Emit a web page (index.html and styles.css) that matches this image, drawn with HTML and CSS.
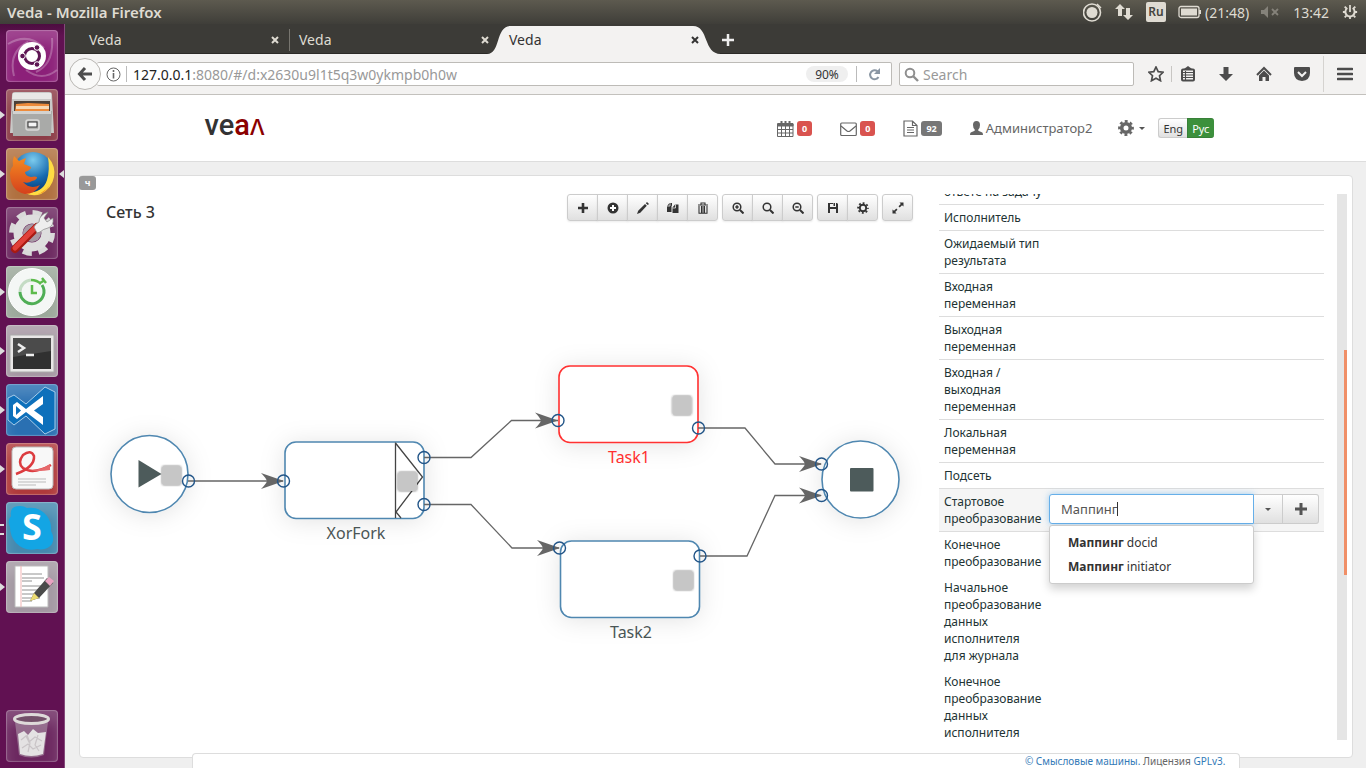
FILE: index.html
```html
<!DOCTYPE html>
<html lang="ru">
<head>
<meta charset="utf-8">
<title>Veda</title>
<link rel="stylesheet" href="styles.css">
</head>
<body>
<header class="topbar">
  <span class="topbar-title">Veda - Mozilla Firefox</span>
  <div class="tray">
    <svg width="20" height="20" viewBox="0 0 20 20"><circle cx="9" cy="10.500" r="8.500" fill="none" stroke="#dfdbd2" stroke-width="1.600"/><circle cx="9" cy="10.500" r="5.500" fill="#dfdbd2"/><path d="M14 2l4 4" stroke="#dfdbd2" stroke-width="1.500"/></svg>
    <svg class="tray-net" width="18" height="18" viewBox="0 0 18 18" fill="#dfdbd2"><path d="M5 1l5 5H7v7H3V6H0zM13 17l5-5h-3V5h-4v7H8z"/></svg>
    <span class="tray-lang">Ru</span>
    <svg class="tray-battery" width="24" height="14" viewBox="0 0 24 14"><rect x="1" y="1.500" width="20" height="11" rx="2" fill="none" stroke="#dfdbd2" stroke-width="1.300"/><rect x="3" y="3.500" width="16" height="7" fill="#dfdbd2"/><path d="M22 5v4" stroke="#dfdbd2" stroke-width="2"/></svg>
    <span>(21:48)</span>
    <svg class="tray-sound" width="18" height="12" viewBox="0 0 18 12"><path d="M0 4h3l4-4v12L3 8H0z" fill="#85827a"/><path d="M11 3l6 6m0-6l-6 6" stroke="#85827a" stroke-width="1.800"/></svg>
    <span class="tray-clock">13:42</span>
    <svg class="tray-power" width="16" height="16" viewBox="0 0 18 18" fill="none" stroke="#dfdbd2"><path d="M6 4.500a5.200 5.200 0 1 0 6 0" stroke-width="2.200"/><path d="M9 1v8" stroke-width="2"/><path d="M1 9h3M14 9h3M3 15l2-2M15 15l-2-2M9 17v-3M3 3l2 2M15 3l-2 2" stroke-width="2"/></svg>
  </div>
</header>
<div class="desktop">
  <nav class="launcher" aria-label="Launcher">
    <button class="app app-dash" aria-label="Ubuntu"><svg viewBox="0 0 52 52"><g fill="none" stroke="#ffffff" stroke-opacity=".25" stroke-width="2"><path d="M2 14Q22 2 38 18M46 8Q48 34 30 42M8 46Q2 22 22 12M20 40Q36 52 51 40"/></g><circle cx="26" cy="26" r="14" fill="#fff"/><circle cx="26" cy="26" r="7.500" fill="none" stroke="#5e1654" stroke-width="3"/><g fill="#5e1654" stroke="#fff"><circle cx="16.500" cy="26" r="2.800"/><circle cx="31" cy="17.500" r="2.800"/><circle cx="31" cy="34.500" r="2.800"/></g></svg></button>
    <button class="app app-files running" aria-label="Files"><svg viewBox="0 0 52 52"><path d="M6 6q0-3 3-3h34q3 0 3 3l2 38H4z" fill="#c9c9c7"/><path d="M7 4h38v6H6z" fill="#e8e8e6"/><path d="M8 12h36v12H8z" fill="#4b4038"/><path d="M10 15l12-1 21 1v7H9z" fill="#ee8c3c"/><path d="M10 17h33v3H10z" fill="#f8d9b4"/><path d="M6 22h40l-1 25H7z" fill="#a9aaa8"/><path d="M7 22h38v3H7z" fill="#d2d2d0"/><rect x="20" y="31" width="13" height="10" rx="2" fill="#b0b0ae" stroke="#d9d9d7" stroke-width="1.500"/><rect x="22" y="33" width="9" height="5" fill="#f4f4f4" stroke="#333"/></svg></button>
    <button class="app app-firefox running focused" aria-label="Firefox"><svg viewBox="0 0 52 52"><defs><radialGradient id="globe" cx=".5" cy=".2" r=".8"><stop offset="0" stop-color="#7ccbed"/><stop offset=".6" stop-color="#176ab0"/><stop offset="1" stop-color="#0b3a76"/></radialGradient><linearGradient id="fox" x2="0" y2="1"><stop offset="0" stop-color="#f58c22"/><stop offset="1" stop-color="#d5401c"/></linearGradient></defs><circle cx="27" cy="24" r="20" fill="url(#globe)"/><path d="M42 9q8 9 6 20T35 46q-8 3-16-1 18 0 22-13 3-10 1-23z" fill="#ffdc43"/><path d="M8 8l5 5q4-2 7-3l-2 6 7 3q0 3-6 5 0 4 6 5 4-1 6 0 0 3-5 4-4 3-9 1 7 8 17 3-5 9-15 9Q4 43 4 25q0-4 3-7-1-5 1-10z" fill="url(#fox)"/><path d="M36 45q7-4 10-13-3 11-17 15z" fill="#f58c22"/></svg></button>
    <button class="app app-settings" aria-label="System Settings"><svg viewBox="0 0 52 52"><circle cx="26" cy="26" r="20" fill="none" stroke="#d9d9d9" stroke-width="6" stroke-dasharray="9 6.700"/><circle cx="26" cy="26" r="14" fill="none" stroke="#dedede" stroke-width="9"/><circle cx="26" cy="26" r="9" fill="#a79aa5"/><path d="M9 42L31 20" stroke="#a81a12" stroke-width="8" stroke-linecap="round"/><path d="M9 41L30 20" stroke="#e0413a" stroke-width="5" stroke-linecap="round"/><path d="M28 20q1-3 5-5 0-7 9-10l-4 6 3 4 6-4q1 8-5 10-5 1-8 4l-3 1z" fill="#eee" stroke="#888" stroke-width=".7"/></svg></button>
    <button class="app app-timer running" aria-label="Timer"><svg viewBox="0 0 52 52"><circle cx="26" cy="26" r="23.500" fill="#f4f7f5" stroke="#fff"/><path d="M36 19a12 12 0 1 1-22 7" fill="none" stroke="#4fae55" stroke-width="3"/><path d="M14 26a12 12 0 0 1 11-12" fill="none" stroke="#c4dcc4" stroke-width="3"/><path d="M25 14q6 0 10 4M34 17l5-3m-3-2l4 5M26 19v8h5" fill="none" stroke="#5dbb4c" stroke-width="2.500"/></svg></button>
    <button class="app app-terminal running" aria-label="Terminal"><svg viewBox="0 0 52 52"><path d="M4 10h44v37H4z" fill="#e8e6e6" stroke="#aaa"/><path d="M7 13h38v31H7z" fill="#303030"/><path d="M7 13h38v13L7 32z" fill="#4b4b4b"/><path d="M12 19l6 4-6 4M20 30h8" fill="none" stroke="#eee" stroke-width="2.500"/></svg></button>
    <button class="app app-code running" aria-label="Visual Studio Code"><svg viewBox="0 0 52 52"><path d="M2 14l6-3 12 9L39 3l10 5v37l-10 5-19-18-12 9-6-5z" fill="#0d70bb" stroke="#a8cdea"/><path d="M37 12L20 25l-9-7-4 3v11l4 3 9-7 17 13zM37 20v13l-9-6.500zM10 22v9l5-4.500z" fill="#fff" fill-rule="evenodd"/></svg></button>
    <button class="app app-reader running" aria-label="Document Viewer"><svg viewBox="0 0 52 52"><rect x="6" y="4" width="41" height="42" rx="4" fill="#f8f8f8" stroke="#bbb"/><path d="M12 36h28M12 39h28M12 42h18" stroke="#bbb"/><path d="M10 31Q29 24 28 13 25 6 17 12 11 20 17 25 27 32 45 22" fill="none" stroke="#dc3c40" stroke-width="2.500"/><path d="M24 27q12 0 20-6v6q-12 2-20 0z" fill="#e66a6c"/></svg></button>
    <button class="app app-skype running-two" aria-label="Skype"><svg viewBox="0 0 52 52"><path d="M5 14Q3 4 14 4q4 0 7 2 12-2 20 8 5 7 4 15 4 7 1 13-5 7-15 5-12 3-21-6-6-7-6-16-3-6 1-11z" fill="#13a5e4"/><text class="skype-letter" x="26" y="38" text-anchor="middle">S</text></svg></button>
    <button class="app app-editor running" aria-label="Text Editor"><svg viewBox="0 0 52 52"><path d="M9 5h33v41H9z" fill="#fff" stroke="#bbb"/><path d="M15 5v41" stroke="#f2b5b5"/><path d="M16 13h20M16 17h22M16 20h10M16 25h22M16 29h20M16 33h15M16 37h18M16 40h10" stroke="#777" stroke-width=".8"/><path d="M24 40l4-8L41 17l6 5-14 15z" fill="#4a4a4a"/><path d="M24 40l4-8 5 5z" fill="#ecdc72"/><path d="M39 20l4-4 5 4-4 5z" fill="#e9a3c2"/></svg></button>
    <button class="app app-trash" aria-label="Trash"><svg viewBox="0 0 52 52"><path d="M9 12l4 33q12 5 25 0l4-33z" fill="#a78ea3" fill-opacity=".65"/><path d="M12 24l6-3 4 4 5-6 5 4 8-1-3 22q-12 4-23 0z" fill="#e4e2e3"/><path d="M15 30l5-4 3 6 6-5 7 4M16 38l6-4 5 5 8-4M21 25l3 8-2 9M32 25l-3 10 4 6" stroke="#c9c4c7" fill="none" stroke-width="1.200"/><ellipse cx="25.500" cy="9" rx="17" ry="4.500" fill="#735069" stroke="#dedad9" stroke-width="3"/></svg></button>
  </nav>
  <div class="browser">
    <div class="tabs">
      <div class="tab"><span>Veda</span><button class="tab-close" aria-label="Close tab"><svg viewBox="0 0 8 8"><path d="M1 1l6 6M7 1L1 7"/></svg></button></div>
      <div class="tab tab-divided"><span>Veda</span><button class="tab-close" aria-label="Close tab"><svg viewBox="0 0 8 8"><path d="M1 1l6 6M7 1L1 7"/></svg></button></div>
      <div class="tab tab-active"><svg class="tab-shape" viewBox="0 0 234 28" preserveAspectRatio="none"><path d="M0 28C14 28 8 0 24 0H206C222 0 216 28 234 28z" fill="#f3f2f1"/></svg><span>Veda</span><button class="tab-close" aria-label="Close tab"><svg viewBox="0 0 8 8"><path d="M1 1l6 6M7 1L1 7"/></svg></button></div>
      <button class="tab-new" aria-label="New tab"><svg width="14" height="14" viewBox="0 0 14 14"><path d="M7 1v12M1 7h12" stroke="#eee" stroke-width="2.500"/></svg></button>
    </div>
    <div class="navbar">
      <button class="back" aria-label="Back"><svg width="16" height="16" viewBox="0 0 16 16"><path d="M8 2L2.500 8 8 14M3 8h12" fill="none" stroke="#4d4d4d" stroke-width="3"/></svg></button>
      <div class="urlbar">
        <svg width="15" height="15" viewBox="0 0 15 15"><circle cx="7.500" cy="7.500" r="6.500" fill="none" stroke="#666"/><path d="M7.500 6v5.500M7.500 3v2" stroke="#666" stroke-width="1.600"/></svg>
        <i class="bar-line"></i>
        <span class="url"><b>127.0.0.1</b>:8080/#/d:x2630u9l1t5q3w0ykmpb0h0w</span>
        <button class="zoom-level">90%</button>
        <i class="bar-line"></i>
        <button class="reload" aria-label="Reload"><svg width="13" height="13" viewBox="0 0 13 13"><path d="M9.500 3.300A4.500 4.500 0 1 0 10.500 9" fill="none" stroke="#8a96a3" stroke-width="2"/><path d="M12 0v6H6z" fill="#8a96a3"/></svg></button>
      </div>
      <label class="searchbar">
        <svg width="15" height="15" viewBox="0 0 15 15"><circle cx="6" cy="6" r="4.300" fill="none" stroke="#8f8f8f" stroke-width="2"/><path d="M9 9l5 5" stroke="#8f8f8f" stroke-width="2.400"/></svg>
        <input type="text" placeholder="Search" aria-label="Search">
      </label>
      <div class="nav-icons">
        <button aria-label="Bookmark"><svg width="16" height="16" viewBox="0 0 16 16"><path d="M8 1l2.200 4.600 5 .6-3.700 3.500 1 5L8 12.200l-4.500 2.500 1-5L.8 6.200l5-.6z" fill="none" stroke="#4c4c4c" stroke-width="1.700"/></svg></button>
        <button class="nav-list" aria-label="Bookmarks"><svg width="16" height="16" viewBox="0 0 16 16"><rect x="2" y="3.500" width="12" height="11" rx="1" fill="none" stroke="#4c4c4c" stroke-width="2"/><path d="M4 3l4-3 4 3z" fill="#4c4c4c"/><path d="M3 6.500h10M3 9h10M3 11.500h10M5.500 5v9" stroke="#4c4c4c" stroke-width="1.100"/></svg></button>
        <button aria-label="Downloads"><svg width="16" height="16" viewBox="0 0 16 16"><path d="M5.500 1h5v7H15l-7 7-7-7h4.500z" fill="#4c4c4c"/></svg></button>
        <button aria-label="Home"><svg width="16" height="16" viewBox="0 0 16 16"><path d="M1 9l7-7 7 7" fill="none" stroke="#4c4c4c" stroke-width="2"/><path d="M3 9.500l5-5 5 5V15H9.500v-4h-3v4H3z" fill="#4c4c4c"/></svg></button>
        <button aria-label="Pocket"><svg width="16" height="16" viewBox="0 0 16 16"><path d="M0 2q0-1 1-1h14q1 0 1 1v5q0 7-8 8-8-1-8-8z" fill="#4c4c4c"/><path d="M4 6l4 4 4-4" fill="none" stroke="#f3f2f1" stroke-width="2"/></svg></button>
        <i class="menu-line"></i>
        <button aria-label="Menu"><svg width="16" height="16" viewBox="0 0 16 16"><path d="M1 3h14M1 8h14M1 13h14" stroke="#4c4c4c" stroke-width="2.600" stroke-linecap="round"/></svg></button>
      </div>
    </div>
    <main class="page">
      <header class="site-head">
        <div class="container">
          <a class="logo" href="#"><span>ve</span><span class="logo-red">aʌ</span></a>
          <nav class="site-nav">
            <a href="#"><svg width="17" height="17" viewBox="0 0 17 17" fill="none" stroke="#666"><path d="M.5 3.500h15.500v13H.5zM1 9.500h15M1 13h15M4.500 6v10M8.500 6v10M12.500 6v10" /><path d="M1 4h15v2H1z" fill="#666"/><path d="M4.500 1v3M8.500 1v3M12.500 1v3" stroke-width="2"/></svg><span class="badge badge-red">0</span></a>
            <a href="#"><svg width="17" height="17" viewBox="0 0 17 17" fill="none" stroke="#666" stroke-width="1.200"><rect x=".700" y="3" width="15.600" height="12.500" rx="1"/><path d="M1 6l6 5q1.500 1 3 0l6-5"/></svg><span class="badge badge-red">0</span></a>
            <a href="#"><svg width="15" height="17" viewBox="0 0 15 17" fill="none" stroke="#666" stroke-width="1.200"><path d="M1 1h8.500L14 5.500V16H1zM9.500 1v4.500H14M4 7.500h7M4 10h7M4 12.500h7"/></svg><span class="badge badge-gray">92</span></a>
            <a class="user" href="#"><svg width="13" height="14" viewBox="0 0 13 14" fill="#666"><path d="M6.500 0q3.500 0 3.500 4 0 3-1.700 4.500v1.300l4 1.700q.7.500.7 2.500H0q0-2 .7-2.500l4-1.700V8.500Q3 7 3 4q0-4 3.500-4z"/></svg><span>Администратор2</span></a>
            <button class="gear-menu" aria-label="Настройки"><svg width="16" height="16" viewBox="0 0 16 16"><circle cx="8" cy="8" r="4.300" fill="none" stroke="#666" stroke-width="3.600"/><circle cx="8" cy="8" r="6.700" fill="none" stroke="#666" stroke-width="2.400" stroke-dasharray="2.900 2.360" stroke-dashoffset="1.450"/></svg><i class="caret"></i></button>
            <div class="lang"><button>Eng</button><button class="lang-active">Рус</button></div>
          </nav>
        </div>
      </header>
      <section class="panel">
        <span class="panel-tag">ч</span>
        <div class="editor">
          <svg class="diagram" role="img" aria-label="Сеть 3">
            <defs>
              <filter id="glow" x="-40%" y="-60%" width="180%" height="220%"><feDropShadow dx="0" dy="2" stdDeviation="12" flood-color="#000" flood-opacity=".11"/></filter>
              <filter id="soft" x="-30%" y="-30%" width="160%" height="160%"><feDropShadow dx="0" dy="0" stdDeviation="1" flood-color="#000" flood-opacity=".6"/></filter>
              <path id="head" d="M0 0L-23-8Q-18-3-17 0-18 3-23 8z" fill="#666"/>
              <rect id="grip" x="-9.500" y="-9.500" width="19" height="19" rx="2" fill="#c6c6c6" filter="url(#soft)"/>
            </defs>
            <g transform="translate(-80 -176)">
              <g class="nodes" filter="url(#glow)">
                <circle cx="149.500" cy="474" r="38.500"/>
                <rect x="285" y="442" width="139" height="76.500" rx="11"/>
                <rect class="node-selected" x="559" y="366" width="139" height="76.500" rx="11"/>
                <rect x="560.500" y="541" width="139" height="76.500" rx="11"/>
                <circle cx="860.500" cy="479.500" r="38.500"/>
              </g>
              <path d="M138.500 460v27.500l23-13.500z" fill="#4d5b5b"/>
              <rect x="850" y="468" width="23.500" height="23.500" rx="1" fill="#4d5b5b"/>
              <path class="fork" d="M395.500 442.500v75.500M395.500 443l27 34-26.500 35 5 6"/>
              <path class="edges" d="M188 481H283M424 457.500H471L511.500 420.500H558M424 504.500H471L512 548H559M698 428H745L775 464H821M700 556H747L775 495.500H821"/>
              <use href="#head" x="284" y="481"/><use href="#head" x="558" y="420.500"/><use href="#head" x="560" y="548"/><use href="#head" x="822" y="464"/><use href="#head" x="822" y="495.500"/>
              <use href="#grip" x="171.500" y="475.500"/><use href="#grip" x="407.500" y="481.500"/><use href="#grip" x="682" y="405.500"/><use href="#grip" x="683.500" y="580.500"/>
              <g class="ports"><circle cx="188.500" cy="481" r="6"/><circle cx="283.500" cy="481" r="6"/><circle cx="424" cy="457.500" r="6"/><circle cx="424" cy="504.500" r="6"/><circle cx="558" cy="420.500" r="6"/><circle cx="698.500" cy="428" r="6"/><circle cx="559.500" cy="548" r="6"/><circle cx="700" cy="556" r="6"/><circle cx="821.500" cy="464" r="6"/><circle cx="821.500" cy="495.500" r="6"/></g>
              <g class="labels"><text x="356" y="539">XorFork</text><text class="label-selected" x="629" y="463">Task1</text><text x="631" y="638">Task2</text></g>
            </g>
          </svg>
          <div class="editor-head">
            <h1>Сеть 3</h1>
            <div class="tools">
              <div class="group">
                <button aria-label="Добавить"><svg viewBox="0 0 12 12"><path d="M6 1v10M1 6h10" stroke-width="2.600"/></svg></button>
                <button aria-label="Добавить условие"><svg viewBox="0 0 12 12"><circle cx="6" cy="6" r="5.500" class="solid"/><path d="M6 3v6M3 6h6" stroke="#fff" stroke-width="2"/></svg></button>
                <button aria-label="Изменить"><svg viewBox="0 0 12 12"><path class="solid" d="M0 12l1.200-3.300L8 2l1.800 1.800-6.500 6.900zM8.800 1.200L10 0l2 2-1.200 1.100z"/></svg></button>
                <button aria-label="Копировать"><svg viewBox="0 0 12 12"><path class="solid" d="M0 4l2.500-3H5v2.500L4.500 4v6H0zM5.500 5.500L8 2.500h3.500V11h-6z"/><path d="M3 1v3H0M8.500 2.500V6h-3" stroke="#fff" stroke-width=".7"/></svg></button>
                <button aria-label="Удалить"><svg viewBox="0 0 12 12"><path d="M1 3h10M4 2.500V1h4v1.500M2 4v7.300h8V4M4.500 4v7M6 4v7M7.500 4v7" stroke-width="1.100"/></svg></button>
              </div>
              <div class="group">
                <button aria-label="Увеличить"><svg viewBox="0 0 12 12"><circle cx="5" cy="5" r="3.800" stroke-width="1.500"/><path d="M8 8l3.500 3.500" stroke-width="2"/><path d="M5 3.300v3.400M3.300 5h3.400" stroke-width="1.500"/></svg></button>
                <button aria-label="Масштаб"><svg viewBox="0 0 12 12"><circle cx="5" cy="5" r="3.800" stroke-width="1.500"/><path d="M8 8l3.500 3.500" stroke-width="2"/></svg></button>
                <button aria-label="Уменьшить"><svg viewBox="0 0 12 12"><circle cx="5" cy="5" r="3.800" stroke-width="1.500"/><path d="M8 8l3.500 3.500" stroke-width="2"/><path d="M3.300 5h3.400" stroke-width="1.500"/></svg></button>
              </div>
              <div class="group">
                <button aria-label="Сохранить"><svg viewBox="0 0 12 12"><path class="solid" d="M1 1h2v4h6V1h1l1 1v9H9V7H3v4H1zM6.500 1H8v3H6.500zM3 1h3v1H3z"/></svg></button>
                <button aria-label="Параметры"><svg viewBox="0 0 12 12"><circle cx="6" cy="6" r="3.200" stroke-width="1.900"/><circle cx="6" cy="6" r="4.900" stroke-width="1.800" stroke-dasharray="1.850 2" stroke-dashoffset=".92"/></svg></button>
              </div>
              <div class="group">
                <button aria-label="Развернуть"><svg viewBox="0 0 12 12"><path class="solid" d="M7.500.5h4v4L10 3.200 7.700 5.500 6.500 4.300 8.800 2zM.5 7.500L2 8.800l2.300-2.300 1.200 1.200L3.200 10l1.300 1.500h-4z"/></svg></button>
              </div>
            </div>
          </div>
        </div>
        <div class="props">
          <table>
            <tbody>
              <tr><th scope="row">ответе на задачу</th><td></td></tr>
              <tr><th scope="row">Исполнитель</th><td></td></tr>
              <tr><th scope="row">Ожидаемый тип результата</th><td></td></tr>
              <tr><th scope="row">Входная переменная</th><td></td></tr>
              <tr><th scope="row">Выходная переменная</th><td></td></tr>
              <tr><th scope="row">Входная / выходная переменная</th><td></td></tr>
              <tr><th scope="row">Локальная переменная</th><td></td></tr>
              <tr><th scope="row">Подсеть</th><td></td></tr>
              <tr class="row-active"><th scope="row"><label for="mapping">Стартовое преобразование</label></th><td>
                <div class="picker">
                  <input id="mapping" type="text" value="Маппинг">
                  <i class="cursor"></i>
                  <button class="picker-drop" aria-label="Открыть список"><i class="caret"></i></button>
                  <button class="picker-add" aria-label="Добавить"><svg width="12" height="12" viewBox="0 0 12 12"><path d="M6 0v12M0 6h12" stroke="#555" stroke-width="3"/></svg></button>
                  <ul class="menu"><li><b>Маппинг</b> docid</li><li><b>Маппинг</b> initiator</li></ul>
                </div></td></tr>
              <tr class="plain"><th scope="row">Конечное преобразование</th><td></td></tr>
              <tr class="plain"><th scope="row">Начальное преобразование данных исполнителя для&nbsp;журнала</th><td></td></tr>
              <tr class="plain"><th scope="row">Конечное преобразование данных исполнителя</th><td></td></tr>
            </tbody>
          </table>
        </div>
        <div class="scroll-track"><i class="scroll-thumb"></i></div>
      </section>
      <footer class="site-foot"><div class="foot-box"><a href="#">© Смысловые машины.</a> Лицензия <a href="#">GPLv3.</a></div></footer>
    </main>
  </div>
</div>
</body>
</html>
```
FILE: styles.css
```css
* { box-sizing: border-box; }
body {
  margin: 0;
  height: 100vh;
  display: flex;
  flex-direction: column;
  overflow: hidden;
  background: #efefef;
  color: #333;
  font: 12px/17px "Noto Sans", "Open Sans", sans-serif;
}
button { font: inherit; color: inherit; margin: 0; padding: 0; border: 0; background: none; display: flex; align-items: center; justify-content: center; }
a { color: inherit; text-decoration: none; }
svg { display: block; flex: none; }

.topbar {
  flex: none;
  height: 24px;
  padding: 0 8px 0 7px;
  display: flex;
  align-items: center;
  justify-content: space-between;
  background: linear-gradient(#5d5a4f, #3f3e39);
  color: #dfdbd2;
  font-size: 14px;
}
.topbar-title { font-weight: 600; font-size: 15px; }
.tray { display: flex; align-items: center; }
.tray-net { margin-left: 12px; }
.tray-lang { margin: 0 12px 0 13px; width: 20px; line-height: 20px; text-align: center; border-radius: 2px; background: #dfdbd2; color: #45443e; font-size: 12px; font-weight: 600; }
.tray-battery { margin-right: 3px; }
.tray-sound { margin: 0 14px 0 12px; }
.tray-power { margin-left: 13px; }

.desktop { flex: 1; min-height: 0; display: flex; }
.launcher {
  flex: none;
  width: 65px;
  padding: 6px 0 6px 6px;
  display: flex;
  flex-direction: column;
  gap: 7px;
  background: linear-gradient(#4c0d40, #611152 12px);
  border-right: 1px solid #84497a;
}
.app { position: relative; width: 52px; height: 52px; flex: none; border-radius: 4px; box-shadow: inset 0 0 1px 1px rgba(255,255,255,.25), inset 0 12px 14px rgba(255,255,255,.18); }
.app > svg { width: 52px; height: 52px; }
.app-dash { background: #8c2079; }
.app-files { background: #8c3c47; }
.app-firefox { background: #b0703f; }
.app-settings { background: #6c2860; }
.app-timer { background: #9ca89b; }
.app-terminal { background: #a697a3; }
.app-code { background: #2a70b2; }
.app-reader { background: #b03a3b; }
.app-skype { background: #4589ae; }
.app-editor { background: #a398a2; }
.app-trash { background: #6c2860; margin-top: auto; }
.skype-letter { font: 700 36px "Noto Sans", sans-serif; fill: #fff; }
.running::before, .focused::after { content: ""; position: absolute; top: 22px; border: 4px solid transparent; }
.running::before { left: -6px; border-left: 5px solid #ddd; border-right: 0; }
.focused::after { right: -6px; border-right: 5px solid #ddd; border-left: 0; }
.running-two::before { content: ""; position: absolute; left: -6px; top: 22px; width: 4px; height: 7px; border: solid #ddd; border-width: 2px 0; }

.browser { flex: 1; min-width: 0; display: flex; flex-direction: column; }
.tabs { flex: none; height: 30px; padding: 2px 14px 0; display: flex; background: #3c3b37; border-bottom: 1px solid #2b2a27; color: #dfdbd2; font-size: 14px; }
.tab { position: relative; width: 210px; padding: 0 10px; display: flex; align-items: center; justify-content: space-between; }
.tab > span, .tab-close { position: relative; }
.tab-divided::before { content: ""; position: absolute; left: 0; top: 3px; height: 22px; border-left: 1px solid #77756f; }
.tab-active { color: #333; }
.tab-shape { position: absolute; left: -12px; top: 0; width: calc(100% + 24px); height: 28px; }
.tab-close svg { width: 8px; height: 8px; stroke: currentColor; stroke-width: 2; }
.tab-new { margin-left: 12px; }
.navbar { flex: none; height: 41px; padding: 0 13px 0 4px; display: flex; align-items: center; background: #f3f2f1; border-bottom: 1px solid #c3c1bd; }
.back { position: relative; z-index: 1; width: 32px; height: 32px; border: 1px solid #b9b7b3; border-radius: 50%; background: #f9f9f8; }
.urlbar, .searchbar { height: 24px; display: flex; align-items: center; background: #fff; border: 1px solid #bdbbb7; border-radius: 2px; }
.urlbar { flex: 1; min-width: 0; margin-left: -4px; padding: 0 10px 0 9px; border-left: 0; }
.bar-line { height: 16px; border-left: 1px solid #bbb; margin-left: 5px; }
.url { flex: 1; margin-left: 6px; font-size: 14px; color: #999; white-space: nowrap; }
.url b { font-weight: 400; color: #222; }
.zoom-level { width: 42px; height: 16px; border-radius: 8px; background: #efefef; margin-right: 3px; }
.reload { margin-left: 11px; }
.searchbar { width: 235px; margin-left: 7px; padding: 0 4px; gap: 4px; }
.searchbar input { flex: 1; min-width: 0; padding: 0; border: 0; outline: 0; background: none; font: 14px "Noto Sans", sans-serif; }
.searchbar input::placeholder { color: #999; }
.nav-icons { display: flex; align-items: center; margin-left: 14px; gap: 22px; }
.nav-list { margin: 0 0 0 -15px; padding-left: 8px; border-left: 1px solid #c8c6c3; }
.menu-line { height: 36px; margin: 0 -9px; border-left: 1px solid #d5d3d0; }

.page { position: relative; flex: 1; min-height: 0; display: flex; flex-direction: column; background: #efefef; }
.site-head { flex: none; height: 67px; background: #fff; border-bottom: 1px solid #ddd; }
.container { max-width: 1048px; height: 100%; margin: 0 auto; padding: 0 26px 0 13px; display: flex; align-items: center; justify-content: space-between; }
.logo { display: flex; margin-bottom: 6px; font: 500 29px/32px Roboto, sans-serif; color: #333; }
.logo-red { color: #8b0000; }
.site-nav { display: flex; align-items: center; color: #666; font-size: 13px; }
.site-nav a { display: flex; align-items: center; gap: 3px; margin-right: 28px; }
.site-nav .user { margin-right: 26px; }
.badge { padding: 0 5px; line-height: 15px; border-radius: 3px; color: #fff; font-size: 9px; font-weight: 700; }
.badge-red { background: #d9534f; }
.badge-gray { background: #777; }
.gear-menu { gap: 5px; margin-right: 13px; }
.caret { border: 3px solid transparent; border-top-color: #555; border-bottom: 0; }
.lang { display: flex; font-size: 11px; color: #333; }
.lang button { height: 20px; padding: 0 4px; border: 1px solid #ccc; border-right: 0; border-radius: 3px 0 0 3px; background: linear-gradient(#fff, #e0e0e0); }
.lang .lang-active { border-color: #388038; border-radius: 0 3px 3px 0; background: #3c903c; color: #fff; }

.panel { position: relative; flex: 1; min-height: 0; margin: 13px 13px 10px 14px; display: flex; background: #fff; border: 1px solid #ddd; border-radius: 4px; }
.panel-tag { position: absolute; left: -1px; top: 0; width: 17px; line-height: 14px; text-align: center; border-radius: 3px; background: #999; color: #fff; font-size: 9px; font-weight: 700; }
.editor { position: relative; flex: 1; min-width: 0; padding: 18px 26px; }
.diagram { position: absolute; left: 0; top: 0; width: 100%; height: 100%; overflow: visible; }
.editor-head { position: relative; display: flex; align-items: flex-start; justify-content: space-between; }
.editor-head h1 { margin: 8px 0 0; font-size: 16px; line-height: 20px; font-weight: 500; }
.tools { display: flex; gap: 4px; }
.group { display: flex; }
.group button { width: 31px; height: 27px; border: 1px solid #ccc; background: linear-gradient(#fff, #e0e0e0); box-shadow: 0 1px 2px rgba(0,0,0,.08); }
.group button + button { margin-left: -1px; }
.group button:first-child { border-radius: 3px 0 0 3px; }
.group button:last-child { border-radius: 0 3px 3px 0; }
.group button:only-child { border-radius: 3px; }
.group svg { width: 12px; height: 12px; fill: none; stroke: #333; }
.group .solid { fill: #333; stroke: none; }
.nodes { fill: #fff; stroke: #4f87b0; stroke-width: 1.600; }
.node-selected { stroke: #ff3030; }
.fork { fill: none; stroke: #444; stroke-width: 1.300; }
.edges { fill: none; stroke: #666; stroke-width: 1.300; }
.ports { fill: none; stroke: #225588; stroke-width: 1.400; }
.labels { font-size: 16px; fill: #4a5555; text-anchor: middle; }
.labels .label-selected { fill: #ff3030; }

.props { flex: none; width: 385px; margin: 18px 0 17px; overflow: hidden; color: #233; }
.props table { width: 100%; margin-top: -15px; border-collapse: separate; border-spacing: 0; table-layout: fixed; }
.props th, .props td { vertical-align: top; padding: 4px 5px; border-bottom: 1px solid #ddd; }
.props th { width: 105px; padding-right: 0; text-align: left; font-weight: 400; white-space: normal; }
.props .plain th, .props .plain td { border-color: transparent; }
.row-active { background: #f5f5f5; }
.props .row-active td { padding-top: 5px; }
.picker { position: relative; display: grid; grid-template-columns: 1fr 29px 36px; height: 30px; }
.picker input { min-width: 0; padding: 0 11px; border: 1px solid #66afe9; border-radius: 3px 0 0 3px; outline: 0; box-shadow: 0 0 6px rgba(102,175,233,.6); font: 13px "Noto Sans", sans-serif; color: #555; }
.cursor { position: absolute; left: 68px; top: 8px; height: 14px; border-left: 1px solid #333; }
.picker button { border: 1px solid #ccc; border-left: 0; background: linear-gradient(#fff, #e0e0e0); }
.picker .picker-add { border-radius: 0 3px 3px 0; }
.menu { position: absolute; z-index: 2; left: 0; top: 31px; width: 205px; margin: 0; padding: 5px 0 4px; list-style: none; background: #fff; border: 1px solid #ccc; border-radius: 3px; box-shadow: 0 5px 10px rgba(0,0,0,.18); color: #333; }
.menu li { padding: 0 18px; line-height: 24px; }
.scroll-track { flex: none; width: 10px; margin: 18px 5px 17px 13px; background: #e5e5e5; }
.scroll-thumb { display: block; width: 3px; height: 225px; margin: 156px 0 0 7px; background: #f08f67; }
.site-foot { position: absolute; left: 0; right: 0; bottom: 0; }
.foot-box { max-width: 1048px; height: 15px; margin: 0 auto; padding: 0 13px; text-align: right; background: #fff; border: 1px solid #ddd; border-bottom: 0; border-radius: 4px 4px 0 0; font-size: 10px; line-height: 14px; color: #666; }
.foot-box a { color: #337ab7; }
```
